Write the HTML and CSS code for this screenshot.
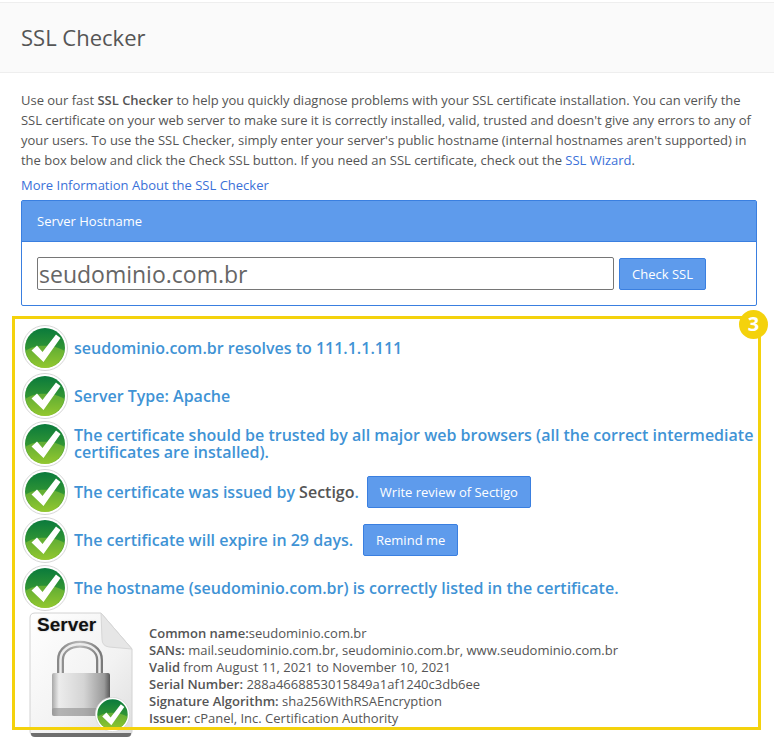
FILE: index.html
```html
<!DOCTYPE html>
<html>
<head>
  <title>SSL Checker</title>
  <link rel="stylesheet" href="styles.css">
</head>
<body>

<svg class="defs" width="0" height="0">
  <defs>
    <linearGradient id="ball" x1="0" y1="0" x2="0" y2="1">
      <stop offset="0" stop-color="#0a7a3c"/>
      <stop offset="0.5" stop-color="#2f9434"/>
      <stop offset="1" stop-color="#86c02a"/>
    </linearGradient>
    <linearGradient id="paper" x1="0" y1="0" x2="1" y2="1">
      <stop offset="0" stop-color="#ffffff"/>
      <stop offset="0.6" stop-color="#f2f2f2"/>
      <stop offset="1" stop-color="#dedede"/>
    </linearGradient>
    <linearGradient id="steel" x1="0" y1="0" x2="1" y2="0">
      <stop offset="0" stop-color="#a8a8a8"/>
      <stop offset="0.12" stop-color="#ececec"/>
      <stop offset="0.55" stop-color="#d4d4d4"/>
      <stop offset="0.9" stop-color="#9a9a9a"/>
      <stop offset="1" stop-color="#585858"/>
    </linearGradient>
    <linearGradient id="shackle" x1="0" y1="0" x2="1" y2="0">
      <stop offset="0" stop-color="#8a8a8a"/>
      <stop offset="0.5" stop-color="#b8b8b8"/>
      <stop offset="1" stop-color="#7a7a7a"/>
    </linearGradient>
    <symbol id="okball" viewBox="0 0 46 46">
      <circle cx="23" cy="23" r="22.5" fill="#ffffff" stroke="#d6d6d6"/>
      <circle cx="23" cy="23" r="20" fill="url(#ball)"/>
      <path d="M3.5 26 C12 19 32 19 42.5 26 C40 36 32 43 23 43 C14 43 6 36 3.5 26 Z" fill="#a5d035" opacity="0.45"/>
      <path d="M9.5 25.5 L15 20.5 L20.5 27 L34 9.5 L38.5 13 L21.5 37 Z" fill="#ffffff"/>
    </symbol>
  </defs>
</svg>

<div class="page-head">
  <h1>SSL Checker</h1>
</div>

<div class="content">
  <p class="intro">Use our fast <b>SSL Checker</b> to help you quickly diagnose problems with your SSL certificate installation. You can verify the SSL certificate on your web server to make sure it is correctly installed, valid, trusted and doesn't give any errors to any of your users. To use the SSL Checker, simply enter your server's public hostname (internal hostnames aren't supported) in the box below and click the Check SSL button. If you need an SSL certificate, check out the <a href="#">SSL Wizard</a>.</p>
  <p class="more"><a href="#">More Information About the SSL Checker</a></p>

  <div class="panel">
    <div class="panel-title">Server Hostname</div>
    <div class="panel-body">
      <input class="host" type="text" value="seudominio.com.br">
      <a class="btn check" href="#">Check SSL</a>
    </div>
  </div>

  <div class="results">
    <div class="frame"></div>
    <div class="badge">3</div>

    <div class="row">
      <svg class="ok"><use href="#okball"/></svg>
      <div class="msg">seudominio.com.br resolves to 111.1.1.111</div>
    </div>
    <div class="row">
      <svg class="ok"><use href="#okball"/></svg>
      <div class="msg">Server Type: Apache</div>
    </div>
    <div class="row">
      <svg class="ok"><use href="#okball"/></svg>
      <div class="msg">The certificate should be trusted by all major web browsers (all the correct intermediate certificates are installed).</div>
    </div>
    <div class="row">
      <svg class="ok"><use href="#okball"/></svg>
      <div class="msg">The certificate was issued by <span class="issuer">Sectigo</span>.</div>
      <a class="btn review" href="#">Write review of Sectigo</a>
    </div>
    <div class="row">
      <svg class="ok"><use href="#okball"/></svg>
      <div class="msg">The certificate will expire in 29 days.</div>
      <a class="btn remind" href="#">Remind me</a>
    </div>
    <div class="row">
      <svg class="ok"><use href="#okball"/></svg>
      <div class="msg">The hostname (seudominio.com.br) is correctly listed in the certificate.</div>
    </div>

    <div class="cert">
      <div class="cert-icon">
        <svg width="106" height="126" viewBox="0 0 106 126">
          <path d="M1 6 Q1 1 6 1 L72 1 L103 37 L103 119 Q103 124 98 124 L6 124 Q1 124 1 119 Z" fill="url(#paper)" stroke="#d2d2d2"/>
          <path d="M2 121 L2 122 Q2 125 6 125 L98 125 Q102 125 102 122 L102 121 Z" fill="#6e6e6e"/>
          <path d="M72 1 L103 37 L80 35 Q73 34 73 27 Z" fill="#e6e6e6" stroke="#d6d6d6"/>
          <path d="M31.5 62 L31.5 48 C31.5 27 70.5 27 70.5 48 L70.5 62" fill="none" stroke="url(#shackle)" stroke-width="7"/>
          <path d="M31.5 62 L31.5 48 C31.5 27 70.5 27 70.5 48 L70.5 62" fill="none" stroke="#ececec" stroke-width="2.5"/>
          <rect x="23" y="61" width="58" height="43" rx="2" fill="url(#steel)"/>
          <rect x="23" y="96" width="58" height="8" rx="2" fill="#8e8e8e" opacity="0.6"/>
          <svg x="66" y="85" width="35" height="35"><use href="#okball"/></svg>
        </svg>
        <span class="cert-label">Server</span>
      </div>
      <div class="cert-info">
        <div><b>Common name:</b>seudominio.com.br</div>
        <div><b>SANs:</b> mail.seudominio.com.br, seudominio.com.br, www.seudominio.com.br</div>
        <div><b>Valid</b> from August 11, 2021 to November 10, 2021</div>
        <div><b>Serial Number:</b> 288a4668853015849a1af1240c3db6ee</div>
        <div><b>Signature Algorithm:</b> sha256WithRSAEncryption</div>
        <div><b>Issuer:</b> cPanel, Inc. Certification Authority</div>
      </div>
    </div>
  </div>
</div>

</body>
</html>
```

FILE: styles.css
```css
html, body {
  overflow: hidden;
}

body {
  margin: 0;
  height: 740px;
  font-family: "Open Sans", sans-serif;
  font-size: 13px;
  color: #555;
  background: #fff;
}

a {
  color: #3a70d8;
  text-decoration: none;
}

b {
  font-weight: 600;
}

.defs {
  position: absolute;
}

.page-head {
  margin-top: 2px;
  height: 67px;
  padding: 0 0 2px 21px;
  display: flex;
  align-items: center;
  background: #fafafa;
  border-top: 1px solid #eee;
  border-bottom: 1px solid #eee;
}

.page-head h1 {
  margin: 0;
  font-size: 22px;
  font-weight: 400;
  color: #555;
}

.content {
  padding: 17px 17px 0 21px;
}

.intro {
  margin: 0;
  line-height: 20px;
  letter-spacing: -0.015px;
}

.more {
  margin: 5px 0 0 0;
  line-height: 20px;
}

.panel {
  margin-top: 5px;
  height: 106px;
  box-sizing: border-box;
  border: 1px solid #3a7fe0;
  border-radius: 2px;
}

.panel-title {
  height: 41px;
  box-sizing: border-box;
  padding-left: 15px;
  line-height: 40px;
  color: #fff;
  background: #5e9bec;
  border-bottom: 1px solid #3a7fe0;
}

.panel-body {
  display: flex;
  align-items: center;
  gap: 5px;
  padding: 15px 15px 0 15px;
}

.host {
  width: 577px;
  height: 33px;
  box-sizing: border-box;
  padding: 0 1px;
  font-family: "Open Sans", sans-serif;
  font-size: 23px;
  color: #666;
  border: 1px solid #767676;
  border-radius: 2px;
}

.btn {
  display: block;
  box-sizing: border-box;
  height: 32px;
  line-height: 30px;
  text-align: center;
  color: #fff;
  background: #5e9bec;
  border: 1px solid #3a7fe0;
  border-radius: 2px;
}

.check {
  width: 87px;
}

.results {
  position: relative;
  margin: 17px 0 0 1px;
  padding-top: 1px;
}

.frame {
  position: absolute;
  z-index: 1;
  left: -10px;
  top: -7px;
  width: 749px;
  height: 414px;
  box-sizing: border-box;
  border: 3px solid #f4d20c;
  pointer-events: none;
}

.badge {
  position: absolute;
  z-index: 2;
  left: 717px;
  top: -13px;
  width: 29px;
  height: 29px;
  border-radius: 50%;
  background: #f4d20c;
  color: #fff;
  font-size: 20px;
  font-weight: 700;
  line-height: 28px;
  text-align: center;
}

.row {
  display: flex;
  align-items: center;
  height: 48px;
}

.ok {
  flex: none;
  width: 46px;
  height: 46px;
  margin-right: 6px;
}

.msg {
  font-size: 16px;
  font-weight: 600;
  line-height: 17px;
  color: #3f93d5;
}

.issuer {
  color: #555;
}

.review {
  width: 164px;
  margin-left: 8px;
}

.remind {
  width: 95px;
  margin-left: 10px;
}

.cert {
  display: flex;
}

.cert-icon {
  flex: none;
  position: relative;
  width: 106px;
  height: 126px;
  margin-left: 7px;
}

.cert-label {
  position: absolute;
  left: 8px;
  top: 2px;
  font-family: "Liberation Sans", sans-serif;
  font-size: 19px;
  font-weight: 700;
  color: #111;
  text-shadow: 0 0 2px #bbb;
}

.cert-info {
  margin: 13px 0 0 14px;
  line-height: 17px;
  white-space: nowrap;
}
```
